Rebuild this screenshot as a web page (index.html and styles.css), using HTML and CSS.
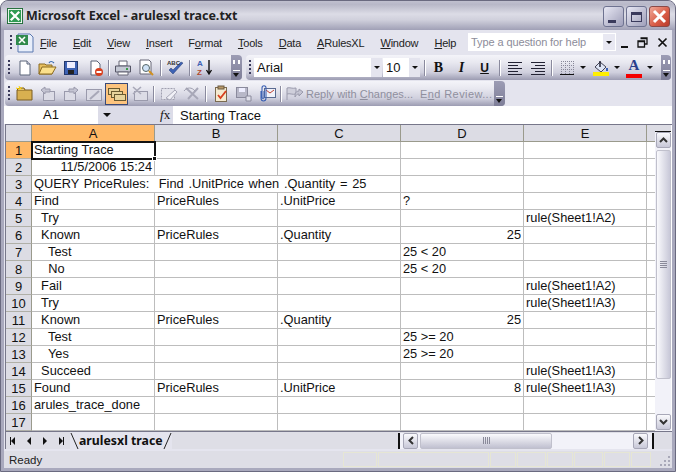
FILE: index.html
```html
<!DOCTYPE html>
<html lang="en">
<head>
    <meta charset="UTF-8">
    <title>Microsoft Excel - arulesxl trace.txt</title>
    <link rel="stylesheet" href="styles.css">
</head>
<body>

<div class="window">
    <!-- title bar -->
    <div class="titlebar">
        <svg class="app-icon" width="16" height="16" viewBox="0 0 17 17"><rect x=".5" y=".5" width="16" height="16" fill="#fff" stroke="#1d6b36"/><rect x="2" y="2" width="13" height="13" fill="#2f9a52"/><path d="M4 4l9 9M13 4l-9 9" stroke="#fff" stroke-width="2.4"/></svg>
        <span class="title-text">Microsoft Excel - arulesxl trace.txt</span>
        <div class="win-btns">
            <div class="win-btn"><span class="glyph-min"></span></div>
            <div class="win-btn"><span class="glyph-max"></span></div>
            <div class="win-btn win-close"><svg width="15" height="15" viewBox="0 0 15 15"><path d="M2 2l11 11M13 2L2 13" stroke="#fff" stroke-width="3"/></svg></div>
        </div>
    </div>

    <div class="inner">
        <!-- menu -->
        <div class="menubar">
            <span class="grip"></span>
            <svg class="doc-icon" width="22" height="20" viewBox="0 0 22 20"><path d="M4 1h12l3 3v15H4z" fill="#e8eefa" stroke="#5a78b0"/><rect x="2" y="2" width="12" height="10" fill="#2f8a4c"/><path d="M5 4l6 6M11 4l-6 6" stroke="#fff" stroke-width="1.6"/></svg>
            <div class="menu-items">
                <span><u>F</u>ile</span>
                <span><u>E</u>dit</span>
                <span><u>V</u>iew</span>
                <span><u>I</u>nsert</span>
                <span>F<u>o</u>rmat</span>
                <span><u>T</u>ools</span>
                <span><u>D</u>ata</span>
                <span><u>A</u>RulesXL</span>
                <span><u>W</u>indow</span>
                <span><u>H</u>elp</span>
            </div>
            <div class="help-box">
                <span class="help-text">Type a question for help</span>
                <span class="help-drop"><i class="arrow"></i></span>
            </div>
            <div class="doc-btns">
                <span class="doc-min"></span>
                <svg width="11" height="11" viewBox="0 0 11 11"><path d="M3.500 1h6.500v6H8M1 4h6.500v6H1zM1 4.500h6.500M3.500 1.500H10" fill="none" stroke="#111" stroke-width="1.300"/></svg>
                <svg width="11" height="11" viewBox="0 0 11 11"><path d="M1.500 1.500l8 8M9.500 1.500l-8 8" stroke="#111" stroke-width="1.700"/></svg>
            </div>
        </div>

        <!-- standard + formatting toolbars -->
        <div class="toolrow">
            <div class="toolbar tb-standard">
                <span class="grip"></span>
                <span class="tb"><svg width="16" height="16" viewBox="0 0 16 16"><path d="M3 1h7l3 3v11H3z" fill="#fff" stroke="#5a6478"/><path d="M10 1v3h3" fill="#dde" stroke="#5a6478"/></svg></span>
                <span class="tb"><svg width="20" height="16" viewBox="0 0 20 16"><path d="M1 4h6l1 1h6v9H1z" fill="#e8c060" stroke="#8a6a20"/><path d="M1 14l3-7h14l-4 7z" fill="#fbe08c" stroke="#8a6a20"/><path d="M11 3c1-2 3-2 5 0" fill="none" stroke="#3a6cb0" stroke-width="1.200"/></svg></span>
                <span class="tb"><svg width="16" height="16" viewBox="0 0 16 16"><rect x="1.500" y="1.500" width="13" height="13" fill="#3d62b4" stroke="#23386e"/><rect x="4" y="2" width="8" height="6" fill="#eef"/><rect x="5" y="10" width="6" height="4" fill="#222"/></svg></span>
                <span class="tb tb-perm"><svg width="16" height="16" viewBox="0 0 16 16"><path d="M3 1h6l3 3v11H3z" fill="#fff" stroke="#5a6478"/><circle cx="11" cy="12" r="4" fill="#d8401f"/><rect x="8.500" y="11" width="5" height="2" fill="#fff"/></svg></span>
                <span class="sep sep-tight"></span>
                <span class="tb"><svg width="18" height="16" viewBox="0 0 18 16"><path d="M5 1h8v5H5z" fill="#fff" stroke="#667"/><path d="M1.500 6h15v6h-15z" fill="#c4c8d4" stroke="#556"/><path d="M4 12h10v3H4z" fill="#fff" stroke="#667"/><rect x="12" y="8" width="2" height="2" fill="#3b9b4a"/></svg></span>
                <span class="tb tb-preview"><svg width="18" height="17" viewBox="0 0 18 17"><path d="M2 1h9l2 2v12H2z" fill="#fff" stroke="#667"/><circle cx="8" cy="9" r="3.500" fill="#cfe2f6" stroke="#566"/><path d="M11 12l4 4" stroke="#d09020" stroke-width="2"/></svg></span>
                <span class="sep"></span>
                <span class="tb"><svg width="19" height="17" viewBox="0 0 19 17"><path d="M3 11l4 4 10-11-2-1-8 8-2-2z" fill="#3d62b4" stroke="#23386e" stroke-width=".5"/><text x="1" y="6" class="abc">ABC</text></svg></span>
                <span class="sep"></span>
                <span class="tb"><svg width="18" height="17" viewBox="0 0 18 17"><text x="1" y="7" class="az az-a">A</text><text x="1" y="16" class="az az-z">Z</text><path d="M13 1v13M10.500 11l2.500 4 2.500-4" fill="none" stroke="#111" stroke-width="1.400"/></svg></span>
                <span class="handle handle-double"><i class="rr"></i><i class="dd"></i></span>
            </div>

            <div class="toolbar tb-format">
                <span class="grip"></span>
                <div class="combo combo-font"><span>Arial</span><b><i class="arrow"></i></b></div>
                <div class="combo combo-size"><span>10</span><b><i class="arrow"></i></b></div>
                <span class="sep sep-b"></span>
                <span class="fmt fmt-b">B</span>
                <span class="fmt fmt-i">I</span>
                <span class="fmt fmt-u">U</span>
                <span class="sep sep-u"></span>
                <span class="tb"><svg width="16" height="14" viewBox="0 0 16 14"><path d="M1 1.500h14M1 4.500h10M1 7.500h14M1 10.500h10M1 13.500h14" stroke="#223"/></svg></span>
                <span class="tb"><svg width="16" height="14" viewBox="0 0 16 14"><path d="M1 1.500h14M5 4.500h10M1 7.500h14M5 10.500h10M1 13.500h14" stroke="#223"/></svg></span>
                <span class="sep"></span>
                <span class="tb tb-drop tb-borders"><svg width="14" height="14" viewBox="0 0 14 14"><path d="M1 .5h12M1 4.500h12M1 8.500h12M1.500 0v13M5.500 0v13M9.500 0v13M13.500 0v13" stroke="#889" stroke-dasharray="1 1"/><path d="M0 13.500h14" stroke="#111"/></svg><i class="arrow"></i></span>
                <span class="tb tb-drop"><svg width="16" height="16" viewBox="0 0 16 16"><path d="M7 2l6 5-5 5-6-5z" fill="#dfe6f6" stroke="#445"/><path d="M7 1v6" stroke="#223" stroke-width="1.500"/><path d="M14 8v3" stroke="#3d62b4" stroke-width="2"/><rect y="12" width="16" height="4" fill="#ffee00"/></svg><i class="arrow"></i></span>
                <span class="tb tb-drop tb-color"><span class="letter-a">A</span><i class="swatch"></i><i class="arrow"></i></span>
                <span class="handle handle-double handle-end"><i class="rr"></i><i class="dd"></i></span>
            </div>
        </div>

        <!-- reviewing toolbar -->
        <div class="toolrow">
            <div class="toolbar tb-review">
                <span class="grip"></span>
                <span class="tb"><svg width="18" height="16" viewBox="0 0 18 16"><path d="M1 4h15v10H1z" fill="#d8b050" stroke="#7a5c20"/><path d="M1 4l2-2h5l1 2" fill="#e8c868" stroke="#7a5c20"/><path d="M3 0l1 3M0 2l3 1M6 1L4 3" stroke="#ffd400"/></svg></span>
                <span class="tb dim"><svg width="16" height="16" viewBox="0 0 16 16"><rect x="3.500" y="5.500" width="11" height="9" fill="#dcdce6" stroke="#9a9aac"/><path d="M1 4l4-3v2h5v3H5v2z" fill="#c4c4d2" stroke="#9a9aac"/></svg></span>
                <span class="tb dim"><svg width="16" height="16" viewBox="0 0 16 16"><rect x="1.500" y="5.500" width="11" height="9" fill="#dcdce6" stroke="#9a9aac"/><path d="M15 4l-4-3v2H6v3h5v2z" fill="#c4c4d2" stroke="#9a9aac"/></svg></span>
                <span class="tb dim"><svg width="16" height="14" viewBox="0 0 16 14"><rect x=".5" y="2.500" width="15" height="11" fill="#dcdce6" stroke="#9a9aac"/><path d="M4 12l9-8" stroke="#a8a8b8" stroke-width="2"/></svg></span>
                <span class="tb tb-active"><svg width="18" height="14" viewBox="0 0 18 14"><rect x=".5" y="1.500" width="11" height="6" fill="#e8d49c" stroke="#6a5a30"/><rect x="3.500" y="4.500" width="11" height="6" fill="#e8d49c" stroke="#6a5a30"/><rect x="6.500" y="7.500" width="11" height="6" fill="#e8d49c" stroke="#6a5a30"/></svg></span>
                <span class="tb dim"><svg width="18" height="16" viewBox="0 0 18 16"><rect x="3.500" y="5.500" width="13" height="9" fill="#dcdce6" stroke="#9a9aac"/><path d="M2 1l8 7M10 1L2 8" stroke="#a8a8b8" stroke-width="1.600"/></svg></span>
                <span class="sep"></span>
                <span class="tb dim"><svg width="18" height="16" viewBox="0 0 18 16"><rect x="1.500" y="2.500" width="13" height="11" fill="#e4e4ec" stroke="#a0a0b0" stroke-dasharray="2 1"/><path d="M6 12l9-8 2 2-7 8z" fill="#f0f0f6" stroke="#a8a8b8"/></svg></span>
                <span class="tb dim"><svg width="18" height="16" viewBox="0 0 18 16"><path d="M3 2l12 11M15 2L5 13" stroke="#a8a8b8" stroke-width="2"/><path d="M1 5c3-4 8-4 11 0" fill="none" stroke="#a0a0b0"/></svg></span>
                <span class="sep"></span>
                <span class="tb"><svg width="16" height="17" viewBox="0 0 16 17"><rect x="2.500" y="2.500" width="11" height="14" fill="#f4ead0" stroke="#7a6a50"/><rect x="5" y="1" width="6" height="3" fill="#b89868" stroke="#6a5a40"/><path d="M5 10l2.500 3L13 6" fill="none" stroke="#d8401f" stroke-width="1.800"/></svg></span>
                <span class="tb dim"><svg width="18" height="16" viewBox="0 0 18 16"><rect x="1.500" y="1.500" width="11" height="10" fill="#b8b8c8" stroke="#8a8a9c"/><rect x="4" y="2" width="6" height="4" fill="#eef"/><path d="M11 10h5v5h-5z" fill="#e0e0ea" stroke="#8a8a9c"/></svg></span>
                <span class="tb"><svg width="18" height="17" viewBox="0 0 18 17"><rect x="6.500" y="3.500" width="11" height="9" fill="#f0f2fa" stroke="#5a6a90"/><path d="M8 5l4 3 4-3" fill="none" stroke="#c04030"/><path d="M3 6v7c0 4 5 4 5 0V3C8 0 4 0 4 3v9c0 2 2 2 2 0V6" fill="none" stroke="#3d62b4" stroke-width="1.100"/></svg></span>
                <span class="sep"></span>
                <span class="tb dim tb-reply"><svg width="19" height="15" viewBox="0 0 19 15"><path d="M2 14V2c3-1 5 1 9 0v6c-4 1-6-1-9 0" fill="#cfcfdb" stroke="#9a9aac"/><path d="M18 6l-4-3v2c-3 0-4 2-4 6 1-2 2-3 4-3v2z" fill="#c4c4d2" stroke="#9a9aac"/></svg></span>
                <span class="review-text">Reply with <u>C</u>hanges...</span>
                <span class="review-text review-end">E<u>n</u>d Review...</span>
                <span class="handle"><i class="dd"></i></span>
            </div>
        </div>

        <!-- formula bar -->
        <div class="formulabar">
            <div class="namebox">A1</div>
            <div class="name-drop"><i class="arrow"></i><span class="fx"><em>f</em>x</span></div>
            <div class="formula-text">Starting Trace</div>
        </div>

        <!-- sheet -->
        <div class="sheet">
            <table class="grid">
                <thead>
                    <tr>
                        <th class="corner"></th>
                        <th class="col-on">A</th>
                        <th>B</th>
                        <th>C</th>
                        <th>D</th>
                        <th>E</th>
                        <th class="col-f"></th>
                    </tr>
                </thead>
                <tbody>
                    <tr><th class="row-on">1</th><td class="active">Starting Trace<i class="fill-handle"></i></td><td></td><td></td><td></td><td></td><td></td></tr>
                    <tr><th>2</th><td class="num">11/5/2006 15:24</td><td></td><td></td><td></td><td></td><td></td></tr>
                    <tr><th>3</th><td colspan="3" class="query">QUERY PriceRules:  Find .UnitPrice when .Quantity = 25</td><td></td><td></td><td></td></tr>
                    <tr><th>4</th><td>Find</td><td>PriceRules</td><td>.UnitPrice</td><td>?</td><td></td><td></td></tr>
                    <tr><th>5</th><td>  Try</td><td></td><td></td><td></td><td>rule(Sheet1!A2)</td><td></td></tr>
                    <tr><th>6</th><td>  Known</td><td>PriceRules</td><td>.Quantity</td><td class="num">25</td><td></td><td></td></tr>
                    <tr><th>7</th><td>    Test</td><td></td><td></td><td>25 &lt; 20</td><td></td><td></td></tr>
                    <tr><th>8</th><td>    No</td><td></td><td></td><td>25 &lt; 20</td><td></td><td></td></tr>
                    <tr><th>9</th><td>  Fail</td><td></td><td></td><td></td><td>rule(Sheet1!A2)</td><td></td></tr>
                    <tr><th>10</th><td>  Try</td><td></td><td></td><td></td><td>rule(Sheet1!A3)</td><td></td></tr>
                    <tr><th>11</th><td>  Known</td><td>PriceRules</td><td>.Quantity</td><td class="num">25</td><td></td><td></td></tr>
                    <tr><th>12</th><td>    Test</td><td></td><td></td><td>25 &gt;= 20</td><td></td><td></td></tr>
                    <tr><th>13</th><td>    Yes</td><td></td><td></td><td>25 &gt;= 20</td><td></td><td></td></tr>
                    <tr><th>14</th><td>  Succeed</td><td></td><td></td><td></td><td>rule(Sheet1!A3)</td><td></td></tr>
                    <tr><th>15</th><td>Found</td><td>PriceRules</td><td>.UnitPrice</td><td class="num">8</td><td>rule(Sheet1!A3)</td><td></td></tr>
                    <tr><th>16</th><td>arules_trace_done</td><td></td><td></td><td></td><td></td><td></td></tr>
                    <tr><th>17</th><td></td><td></td><td></td><td></td><td></td><td></td></tr>
                </tbody>
            </table>

            <div class="vscroll">
                <span class="split-h"></span>
                <span class="sb-btn"><svg width="9" height="6" viewBox="0 0 9 6"><path d="M1 5l3.500-3.500L8 5" fill="none" stroke="#333" stroke-width="2"/></svg></span>
                <div class="v-thumb"><span class="v-grip"></span></div>
                <div class="v-track"></div>
                <span class="sb-btn"><svg width="9" height="6" viewBox="0 0 9 6"><path d="M1 1l3.500 3.500L8 1" fill="none" stroke="#333" stroke-width="2"/></svg></span>
            </div>
        </div>

        <!-- sheet tabs + horizontal scroll -->
        <div class="tabbar">
            <div class="tab-nav">
                <span class="nav nav-first"></span>
                <span class="nav nav-prev"></span>
                <span class="nav nav-next"></span>
                <span class="nav nav-last"></span>
            </div>
            <div class="sheet-tab">
                <svg class="tab-edge" width="9" height="16" viewBox="0 0 9 16"><path d="M1 0l7 16" stroke="#222" stroke-width="1"/></svg>
                <span class="tab-name">arulesxl trace</span>
                <svg class="tab-edge" width="9" height="16" viewBox="0 0 9 16"><path d="M8 0L1 16" stroke="#222" stroke-width="1"/></svg>
            </div>
            <div class="hscroll">
                <span class="tab-split"></span>
                <span class="sb-btn sb-h"><svg width="6" height="9" viewBox="0 0 6 9"><path d="M5 1L1.500 4.500 5 8" fill="none" stroke="#333" stroke-width="2"/></svg></span>
                <div class="h-thumb"><span class="h-grip"></span></div>
                <div class="h-track"></div>
                <span class="sb-btn sb-h"><svg width="6" height="9" viewBox="0 0 6 9"><path d="M1 1l3.500 3.500L1 8" fill="none" stroke="#333" stroke-width="2"/></svg></span>
                <span class="tab-split tab-split-r"></span>
            </div>
        </div>

        <!-- status bar -->
        <div class="statusbar">
            <span class="status-text">Ready</span>
            <div class="panels">
                <span></span><span></span><span></span><span></span><span></span><span></span><span></span><span></span>
            </div>
            <svg class="resize" width="12" height="12" viewBox="0 0 12 12"><path d="M9 1h2v2H9zM5 5h2v2H5zM9 5h2v2H9zM1 9h2v2H1zM5 9h2v2H5zM9 9h2v2H9z" fill="#a8a8b8"/></svg>
        </div>
    </div>
</div>

</body>
</html>
```

FILE: styles.css
```css
html, body {
    margin: 0;
    padding: 0;
    background: #fff;
}
.window {
    width: 676px;
    height: 472px;
    box-sizing: border-box;
    display: flex;
    flex-direction: column;
    overflow: hidden;
    border-radius: 8px 8px 0 0;
    background: #a9a9bd;
    border: 1px solid #6a6a80;
    font-family: "Liberation Sans", sans-serif;
}

/* title bar */
.titlebar {
    height: 29px;
    flex: none;
    display: flex;
    align-items: center;
    padding: 0 5px 0 6px;
    background: linear-gradient(#c0c0cf 0, #b8b8c8 12%, #dcdce6 45%, #d0d0dc 65%, #a0a0b6 100%);
}
.app-icon {
    margin-right: 3px;
}
.title-text {
    font-family: "Noto Sans", sans-serif;
    font-size: 12.500px;
    font-weight: 700;
    color: #222;
}
.win-btns {
    margin-left: auto;
    display: flex;
    gap: 2px;
    margin-top: 2px;
}
.win-btn {
    width: 21px;
    height: 21px;
    box-sizing: border-box;
    border: 1px solid #6e7290;
    border-radius: 3px;
    background: linear-gradient(135deg, #e8e8f4, #b4b4ca 70%, #a0a0bc);
    display: flex;
    align-items: center;
    justify-content: center;
}
.win-close {
    background: linear-gradient(135deg, #f0a898, #d85a44 60%, #b83a2c);
    border-color: #8a4a48;
}
.glyph-min {
    width: 8px;
    height: 3px;
    background: #3a3a5c;
    margin-top: 9px;
    margin-right: 3px;
}
.glyph-max {
    width: 11px;
    height: 10px;
    box-sizing: border-box;
    border: 1px solid #3a3a5c;
    border-top-width: 3px;
}

.inner {
    flex: 1;
    min-height: 0;
    margin: 0 3px 3px 3px;
    display: flex;
    flex-direction: column;
    background: #e5e5ef;
}

/* menu */
.menubar {
    height: 25px;
    flex: none;
    display: flex;
    align-items: center;
    padding-left: 3px;
    background: #e4e4ee;
    font-size: 11px;
    color: #222;
}
.grip {
    width: 2px;
    height: 16px;
    flex: none;
    margin: 0 3px 0 3px;
    background: repeating-linear-gradient(#39395a 0 2px, transparent 2px 4px);
}
.doc-icon {
    margin-right: 4px;
    margin-left: -1px;
}
.menu-items {
    display: flex;
    gap: 16px;
    white-space: nowrap;
    width: 431px;
    flex: none;
    letter-spacing: -0.200px;
}
.help-box {
    width: 148px;
    height: 18px;
    flex: none;
    display: flex;
    align-items: center;
    justify-content: space-between;
    background: #fff;
    margin-left: -3px;
    margin-top: -1px;
}
.help-text {
    padding-left: 3px;
    color: #8c8c9a;
    white-space: nowrap;
    letter-spacing: -0.100px;
}
.help-drop {
    width: 12px;
    height: 16px;
    margin-right: 1px;
    background: #e8e8f2;
    display: flex;
    align-items: center;
    justify-content: center;
}
.arrow {
    display: inline-block;
    flex: none;
    width: 0;
    height: 0;
    border-left: 3px solid transparent;
    border-right: 3px solid transparent;
    border-top: 3px solid #111;
}
.doc-btns {
    display: flex;
    align-items: center;
    gap: 9px;
    margin-left: 5px;
}
.doc-min {
    width: 7px;
    height: 2px;
    background: #111;
    margin-top: 8px;
}

/* toolbars */
.toolrow {
    height: 26px;
    flex: none;
    display: flex;
    gap: 4px;
    padding-left: 1px;
    background: #e4e4ee;
}
.toolbar {
    height: 25px;
    flex: none;
    box-sizing: border-box;
    display: flex;
    align-items: center;
    border-radius: 4px;
    background: linear-gradient(#f4f4f9 0, #e8e8f0 30%, #cfcfdd 70%, #9c9cb2 100%);
    position: relative;
}
.tb-standard {
    width: 237px;
}
.tb-format {
    width: 425px;
}
.tb-review {
    width: 500px;
}
.tb {
    width: 23px;
    height: 22px;
    flex: none;
    box-sizing: border-box;
    display: flex;
    align-items: center;
    justify-content: center;
}
.tb-perm {
    width: 24px;
    margin-left: 2px;
}
.tb-preview {
    margin-left: 1px;
}
.tb-active {
    background: #fdc47e;
    border: 1px solid #3a4a78;
}
.tb-reply {
    width: 21px;
}
.abc {
    font-family: "Liberation Sans", sans-serif;
    font-size: 6px;
    font-weight: 700;
    fill: #333;
}
.az {
    font-family: "Liberation Sans", sans-serif;
    font-size: 8px;
    font-weight: 700;
}
.az-a {
    fill: #3d62b4;
}
.az-z {
    fill: #b0482c;
}
.sep {
    width: 1px;
    height: 16px;
    flex: none;
    margin: 0 3px 0 2px;
    background: #8a8a9e;
    box-shadow: 1px 0 0 #fff;
}
.sep-tight {
    margin: 0 2px 0 0;
}
.sep-b {
    margin: 0 2px 0 4px;
}
.sep-u {
    margin: 0 3px;
}
.handle {
    position: absolute;
    right: 0;
    top: 0;
    bottom: 0;
    width: 11px;
    border-radius: 0 4px 4px 0;
    background: linear-gradient(#9c9cb4, #7e7e98);
    display: flex;
    flex-direction: column;
    align-items: center;
    justify-content: flex-end;
    padding-bottom: 3px;
    box-sizing: border-box;
}
.handle-end {
    width: 10px;
}
.rr {
    display: block;
    width: 7px;
    height: 5px;
    margin-bottom: 5px;
    background:
        linear-gradient(#fff, #fff) 0 0 / 2px 4px no-repeat,
        linear-gradient(#fff, #fff) 5px 0 / 2px 4px no-repeat;
}
.dd {
    display: block;
    width: 7px;
    height: 6px;
    border-top: 1px solid #fff;
    position: relative;
}
.dd::after {
    content: "";
    position: absolute;
    left: 0;
    top: 2px;
    border-left: 3.500px solid transparent;
    border-right: 3.500px solid transparent;
    border-top: 4px solid #111;
}
.combo {
    height: 19px;
    flex: none;
    box-sizing: border-box;
    display: flex;
    align-items: center;
    justify-content: space-between;
    background: #fff;
    font-size: 13px;
    color: #111;
}
.combo span {
    padding-left: 3px;
}
.combo b {
    width: 12px;
    height: 19px;
    background: #e4e4ee;
    border-left: 1px solid #fff;
    box-sizing: border-box;
    display: flex;
    align-items: center;
    justify-content: center;
}
.combo-font {
    width: 128px;
}
.combo-size {
    width: 37px;
    margin-left: 1px;
}
.fmt {
    width: 23px;
    flex: none;
    text-align: center;
    font-family: "Liberation Serif", serif;
    font-size: 14px;
    font-weight: 700;
    color: #111;
}
.fmt-i {
    font-style: italic;
}
.fmt-u {
    text-decoration: underline;
    font-family: "Liberation Sans", sans-serif;
    font-size: 12px;
}
.tb-drop {
    width: 33px;
    justify-content: flex-start;
    padding-left: 5px;
    gap: 5px;
}
.tb-borders {
    gap: 6px;
}
.tb-color {
    position: relative;
}
.letter-a {
    width: 16px;
    text-align: center;
    margin-top: -4px;
    font-family: "Liberation Serif", serif;
    font-size: 15px;
    font-weight: 700;
    color: #2a3f8c;
}
.swatch {
    position: absolute;
    left: 5px;
    bottom: 1px;
    width: 16px;
    height: 4px;
    background: #f40000;
}
.review-text {
    font-size: 11px;
    color: #8f8f9e;
    white-space: nowrap;
    margin-left: 1px;
}
.review-end {
    margin-left: 7px;
    letter-spacing: 0.400px;
}

/* formula bar */
.formulabar {
    height: 18px;
    flex: none;
    display: flex;
    align-items: center;
    margin-top: -1px;
    background: #fff;
    font-size: 13px;
    color: #111;
}
.namebox {
    width: 94px;
    box-sizing: border-box;
    padding-left: 39px;
    background: #fff;
    line-height: 18px;
}
.name-drop {
    width: 75px;
    height: 18px;
    display: flex;
    align-items: center;
    padding-left: 5px;
    box-sizing: border-box;
    background: #dcdce8;
}
.name-drop .arrow {
    border-left-width: 4px;
    border-right-width: 4px;
    border-top-width: 4px;
}
.fx {
    margin-left: 49px;
    font-family: "Liberation Serif", serif;
    font-size: 13px;
}
.formula-text {
    padding-left: 7px;
}

/* sheet */
.sheet {
    flex: none;
    display: flex;
    height: 307px;
    background: #fff;
    border-top: 1px solid #77778a;
    margin-left: 2px;
    box-sizing: border-box;
    box-shadow: -1px 0 0 #77778a;
}
.grid {
    table-layout: fixed;
    border-collapse: separate;
    border-spacing: 0;
    width: 649px;
    flex: none;
    font-size: 12.800px;
    color: #111;
}
.grid thead th {
    width: 122px;
    height: 16px;
    font-size: 13px;
    font-weight: 400;
    padding: 0;
    background: #dcdce4;
    border-right: 1px solid #9a9a8c;
    border-bottom: 1px solid #9a9a8c;
}
.grid thead th.corner {
    width: 25px;
}
.grid thead th.col-f {
    width: 8px;
    border-right: 0;
}
.grid tbody th {
    height: 16px;
    padding: 0;
    font-size: 13px;
    font-weight: 400;
    background: #dcdce4;
    border-right: 1px solid #9a9a8c;
    border-bottom: 1px solid #b0b0a8;
}
.grid thead th.col-on,
.grid tbody th.row-on {
    background: #ffb866;
}
.grid td {
    height: 16px;
    padding: 0 2px;
    box-sizing: content-box;
    white-space: pre;
    overflow: hidden;
    border-right: 1px solid #bdbdbd;
    border-bottom: 1px solid #bdbdbd;
    line-height: 16px;
}
.grid td:last-child {
    padding: 0;
    border-right: 0;
}
.grid td.num {
    text-align: right;
}
.grid td.query {
    word-spacing: 1.200px;
}
.grid td.active {
    position: relative;
    overflow: visible;
    outline: 2px solid #111;
    outline-offset: -1px;
}
.fill-handle {
    position: absolute;
    right: -3px;
    bottom: -3px;
    width: 5px;
    height: 5px;
    background: #111;
    border: 1px solid #fff;
    box-sizing: border-box;
}

/* scrollbars */
.vscroll {
    width: 16px;
    flex: none;
    box-sizing: border-box;
    display: flex;
    flex-direction: column;
    align-items: center;
    padding-bottom: 1px;
    background: #f2f2f9;
}
.split-h {
    width: 16px;
    height: 7px;
    flex: none;
    box-sizing: border-box;
    margin-top: 0;
    border-bottom: 1px solid #111;
    background: #dcdce4;
}
.sb-btn {
    width: 15px;
    height: 16px;
    flex: none;
    box-sizing: border-box;
    display: flex;
    align-items: center;
    justify-content: center;
    border: 1px solid #a8a8b8;
    border-radius: 2px;
    background: linear-gradient(#fafafd, #c8c8d8);
}
.v-thumb {
    width: 15px;
    height: 229px;
    margin-top: 2px;
    flex: none;
    box-sizing: border-box;
    display: flex;
    align-items: center;
    justify-content: center;
    border-radius: 2px;
    border: 1px solid #c0c0cc;
    background: linear-gradient(90deg, #fafafd, #c8c8d8);
}
.v-grip {
    width: 7px;
    height: 7px;
    background: repeating-linear-gradient(#8a8a9a 0 1px, transparent 1px 2px);
}
.v-track {
    flex: 1;
}
.tabbar {
    height: 18px;
    flex: none;
    margin-left: 2px;
    display: flex;
    align-items: center;
    background: #dedee6;
    border-top: 1px solid #77778a;
    box-sizing: border-box;
    box-shadow: -1px 0 0 #77778a;
}
.tab-nav {
    width: 64px;
    display: flex;
    box-sizing: border-box;
}
.nav {
    width: 16px;
    height: 8px;
    position: relative;
}
.nav::before {
    content: "";
    position: absolute;
    top: 0;
    border-top: 4px solid transparent;
    border-bottom: 4px solid transparent;
}
.nav-first::before,
.nav-prev::before {
    left: 5px;
    border-right: 4px solid #111;
}
.nav-next::before,
.nav-last::before {
    left: 5px;
    border-left: 4px solid #111;
}
.nav-first::after,
.nav-last::after {
    content: "";
    position: absolute;
    top: 0;
    width: 1px;
    height: 8px;
    background: #111;
}
.nav-first::after {
    left: 4px;
}
.nav-last::after {
    left: 9px;
}
.sheet-tab {
    height: 17px;
    display: flex;
    align-items: center;
    background: #e4e4ee;
}
.tab-name {
    font-family: "Noto Sans", sans-serif;
    font-size: 12.300px;
    font-weight: 700;
    color: #111;
    white-space: nowrap;
}
.hscroll {
    margin-left: auto;
    width: 256px;
    height: 16px;
    display: flex;
    align-items: center;
    margin-right: 18px;
    background: #f2f2f9;
}
.tab-split {
    width: 2px;
    height: 16px;
    flex: none;
    background: #111;
    margin: 0 3px 0 0;
}
.tab-split-r {
    margin: 0 0 0 4px;
}
.sb-h {
    width: 15px;
    height: 16px;
}
.h-thumb {
    width: 132px;
    height: 16px;
    flex: none;
    margin-left: 2px;
    box-sizing: border-box;
    display: flex;
    align-items: center;
    justify-content: center;
    border: 1px solid #c0c0cc;
    border-radius: 2px;
    background: linear-gradient(#fafafd, #c0c0d0);
}
.h-grip {
    width: 7px;
    height: 7px;
    background: repeating-linear-gradient(90deg, #8a8a9a 0 1px, transparent 1px 2px);
}
.h-track {
    flex: 1;
    height: 16px;
}

/* status bar */
.statusbar {
    flex: 1;
    min-height: 0;
    margin-top: 2px;
    display: flex;
    align-items: center;
    position: relative;
    padding-left: 5px;
    background: #dedee6;
    font-size: 11.500px;
    color: #222;
}
.status-text {
    width: 334px;
}
.panels {
    display: flex;
    gap: 1px;
}
.panels span {
    width: 26px;
    height: 15px;
    box-sizing: border-box;
    border: 1px solid #e6e6d4;
}
.panels span:nth-child(1) {
    width: 34px;
}
.panels span:nth-child(2) {
    width: 111px;
}
.panels span:nth-child(4),
.panels span:nth-child(6) {
    width: 29px;
}
.panels span:nth-child(8) {
    width: 20px;
}
.resize {
    position: absolute;
    right: 1px;
    bottom: 1px;
}
```
